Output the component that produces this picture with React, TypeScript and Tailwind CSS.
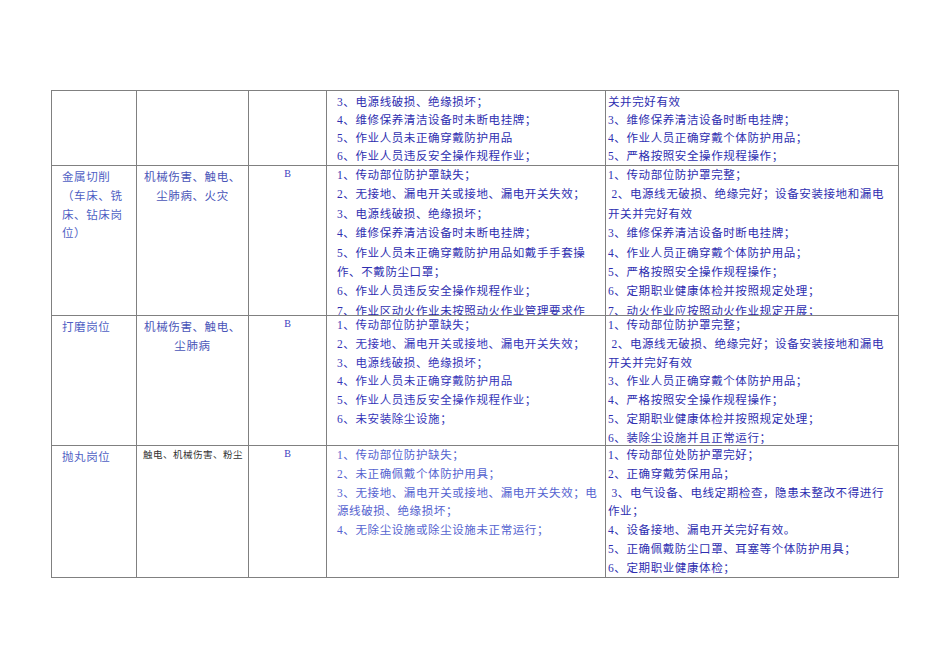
const font = { fontFamily: '"Liberation Serif", "Noto Sans CJK SC", serif' };

interface RowData {
  h: string;
  post: string[];
  harm: string[];
  harmSmall?: boolean;
  level: string;
  risks: string[];
  riskColor: string;
  measures: string[];
  lead: string;
  top: string;
}

const rows: RowData[] = [
  {
    h: "h-[75px]",
    post: [],
    harm: [],
    level: "",
    risks: [
      "3、电源线破损、绝缘损坏；",
      "4、维修保养清洁设备时未断电挂牌；",
      "5、作业人员未正确穿戴防护用品",
      "6、作业人员违反安全操作规程作业；",
    ],
    riskColor: "text-[#2e2eb0]",
    measures: [
      "关并完好有效",
      "3、维修保养清洁设备时断电挂牌；",
      "4、作业人员正确穿戴个体防护用品；",
      "5、严格按照安全操作规程操作；",
    ],
    lead: "leading-[18px]",
    top: "pt-[2px]",
  },
  {
    h: "h-[150px]",
    post: ["金属切削", "（车床、铣", "床、钻床岗", "位）"],
    harm: ["机械伤害、触电、", "尘肺病、火灾"],
    level: "B",
    risks: [
      "1、传动部位防护罩缺失；",
      "2、无接地、漏电开关或接地、漏电开关失效；",
      "3、电源线破损、绝缘损坏；",
      "4、维修保养清洁设备时未断电挂牌；",
      "5、作业人员未正确穿戴防护用品如戴手手套操",
      "作、不戴防尘口罩；",
      "6、作业人员违反安全操作规程作业；",
      "7、作业区动火作业未按照动火作业管理要求作",
    ],
    riskColor: "text-[#2e2eb0]",
    measures: [
      "1、传动部位防护罩完整；",
      " 2、电源线无破损、绝缘完好；设备安装接地和漏电",
      "开关并完好有效",
      "3、维修保养清洁设备时断电挂牌；",
      "4、作业人员正确穿戴个体防护用品；",
      "5、严格按照安全操作规程操作；",
      "6、定期职业健康体检并按照规定处理；",
      "7、动火作业应按照动火作业规定开展；",
    ],
    lead: "leading-[19.4px]",
    top: "pt-0",
  },
  {
    h: "h-[130px]",
    post: ["打磨岗位"],
    harm: ["机械伤害、触电、", "尘肺病"],
    level: "B",
    risks: [
      "1、传动部位防护罩缺失；",
      "2、无接地、漏电开关或接地、漏电开关失效；",
      "3、电源线破损、绝缘损坏；",
      "4、作业人员未正确穿戴防护用品",
      "5、作业人员违反安全操作规程作业；",
      "6、未安装除尘设施；",
    ],
    riskColor: "text-[#3535b8]",
    measures: [
      "1、传动部位防护罩完整；",
      " 2、电源线无破损、绝缘完好；设备安装接地和漏电",
      "开关并完好有效",
      "3、作业人员正确穿戴个体防护用品；",
      "4、严格按照安全操作规程操作；",
      "5、定期职业健康体检并按照规定处理；",
      "6、装除尘设施并且正常运行；",
    ],
    lead: "leading-[18.8px]",
    top: "pt-0",
  },
  {
    h: "h-[132px]",
    post: ["抛丸岗位"],
    harm: ["触电、机械伤害、粉尘"],
    harmSmall: true,
    level: "B",
    risks: [
      "1、传动部位防护缺失；",
      "2、未正确佩戴个体防护用具；",
      "3、无接地、漏电开关或接地、漏电开关失效；电",
      "源线破损、绝缘损坏；",
      "4、无除尘设施或除尘设施未正常运行；",
    ],
    riskColor: "text-[#5563d0]",
    measures: [
      "1、传动部位处防护罩完好；",
      "2、正确穿戴劳保用品；",
      " 3、电气设备、电线定期检查，隐患未整改不得进行",
      "作业；",
      "4、设备接地、漏电开关完好有效。",
      "5、正确佩戴防尘口罩、耳塞等个体防护用具；",
      "6、定期职业健康体检；",
    ],
    lead: "leading-[18.8px]",
    top: "pt-0",
  },
];

function Lines({ items }: { items: string[] }) {
  return (
    <>
      {items.map((t, i) => (
        <div key={i} className="whitespace-pre">
          {t}
        </div>
      ))}
    </>
  );
}

export default function App() {
  return (
    <div className="h-[671px] w-[950px] overflow-hidden bg-white pt-[90px] pl-[51px]" style={font}>
      <div className="grid w-[848px] grid-cols-[85px_112px_78px_279px_293px] border-l border-t border-[#808080] text-[11.5px] tracking-[0.6px]">
        {rows.map((r, i) => (
          <div key={i} className="contents">
            <div className={`${r.h} overflow-hidden border-b border-r border-[#808080] pl-[10px] pt-[2px] leading-[18.8px] text-[#4f5fc4]`}>
              <Lines items={r.post} />
            </div>
            <div
              className={`${r.h} overflow-hidden border-b border-r border-[#808080] pt-[2px] ${
                r.harmSmall
                  ? "pl-[6px] text-[9.5px] tracking-[0.5px] text-[#333333]"
                  : "text-center leading-[18.8px] text-[#4a55b8]"
              }`}
            >
              <Lines items={r.harm} />
            </div>
            <div className={`${r.h} overflow-hidden border-b border-r border-[#808080] pt-[1px] text-center text-[10px] leading-[14px] tracking-normal text-[#3a3ac0]`}>
              {r.level}
            </div>
            <div className={`${r.h} ${r.lead} ${r.top} ${r.riskColor} overflow-hidden border-b border-r border-[#808080] pl-[10px]`}>
              <Lines items={r.risks} />
            </div>
            <div className={`${r.h} ${r.lead} ${r.top} overflow-hidden border-b border-r border-[#808080] pl-[2px] text-[#2e2eb0]`}>
              <Lines items={r.measures} />
            </div>
          </div>
        ))}
      </div>
    </div>
  );
}
